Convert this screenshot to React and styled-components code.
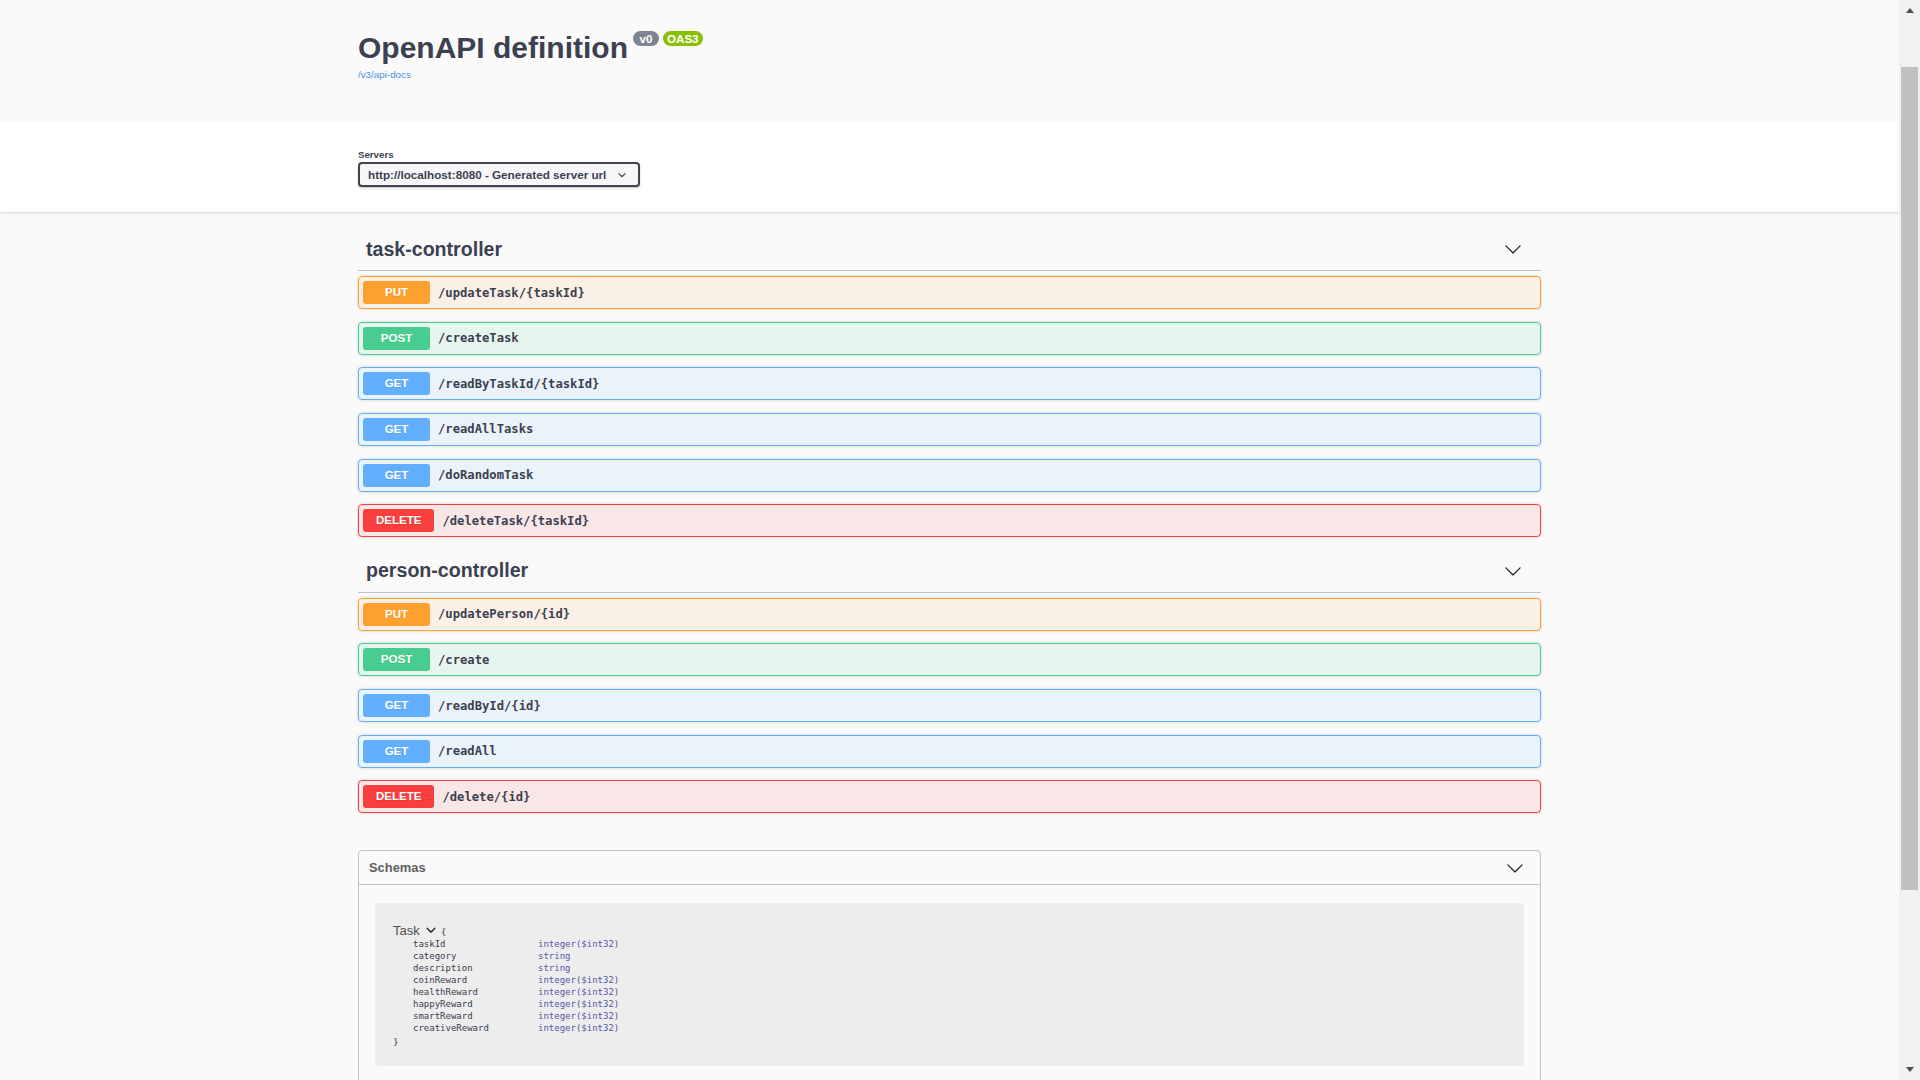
import React from 'react';
import styled, { createGlobalStyle } from 'styled-components';

// colours of each http verb, as swagger-ui paints them
const METHODS = {
  put: '#fca130',
  post: '#49cc90',
  get: '#61affe',
  delete: '#f93e3e',
};

const tags = [
  {
    name: 'task-controller',
    ops: [
      { method: 'put', path: '/updateTask/{taskId}' },
      { method: 'post', path: '/createTask' },
      { method: 'get', path: '/readByTaskId/{taskId}' },
      { method: 'get', path: '/readAllTasks' },
      { method: 'get', path: '/doRandomTask' },
      { method: 'delete', path: '/deleteTask/{taskId}' },
    ],
  },
  {
    name: 'person-controller',
    ops: [
      { method: 'put', path: '/updatePerson/{id}' },
      { method: 'post', path: '/create' },
      { method: 'get', path: '/readById/{id}' },
      { method: 'get', path: '/readAll' },
      { method: 'delete', path: '/delete/{id}' },
    ],
  },
];

const taskProps = [
  ['taskId', 'integer($int32)'],
  ['category', 'string'],
  ['description', 'string'],
  ['coinReward', 'integer($int32)'],
  ['healthReward', 'integer($int32)'],
  ['happyReward', 'integer($int32)'],
  ['smartReward', 'integer($int32)'],
  ['creativeReward', 'integer($int32)'],
];

const ARROW =
  'M17.418 6.109c.272-.268.709-.268.979 0s.271.701 0 .969l-7.908 7.83c-.27.268-.707.268-.979 0l-7.908-7.83c-.27-.268-.27-.701 0-.969.271-.268.709-.268.979 0L10 13.25l7.418-7.141z';
const SMALL_ARROW =
  'M13.418 7.859a.695.695 0 01.978 0 .68.68 0 010 .969l-3.908 3.83a.697.697 0 01-.979 0l-3.908-3.83a.68.68 0 010-.969.695.695 0 01.978 0L10 11l3.418-3.141z';

export default function App() {
  return (
    <Page>
      <GlobalStyle />
      <Main>
        <Header>
          <Wrapper>
            <TitleRow>
              <Title>OpenAPI definition</Title>
              <Badge $bg="#7d8492">v0</Badge>
              <Badge $bg="#89bf04">OAS3</Badge>
            </TitleRow>
            <DocLink>/v3/api-docs</DocLink>
          </Wrapper>
        </Header>

        <SchemeBar>
          <Wrapper>
            <ServersLabel>Servers</ServersLabel>
            <ServerSelect>
              <span>http://localhost:8080 - Generated server url</span>
              <svg width="16" height="16" viewBox="0 0 20 20">
                <path d={SMALL_ARROW} fill="#3b4151" />
              </svg>
            </ServerSelect>
          </Wrapper>
        </SchemeBar>

        <Wrapper>
          {tags.map((tag) => (
            <TagSection key={tag.name}>
              <TagHeading>
                <TagName>{tag.name}</TagName>
                <svg width="18" height="18" viewBox="0 0 20 20">
                  <path d={ARROW} fill="#222" />
                </svg>
              </TagHeading>
              {tag.ops.map((op) => (
                <OpBlock key={op.method + op.path} $color={METHODS[op.method]}>
                  <Method $color={METHODS[op.method]}>{op.method.toUpperCase()}</Method>
                  <OpPath>{op.path}</OpPath>
                </OpBlock>
              ))}
            </TagSection>
          ))}

          <Models>
            <ModelsHeader>
              <span>Schemas</span>
              <svg width="18" height="18" viewBox="0 0 20 20">
                <path d={ARROW} fill="#222" />
              </svg>
            </ModelsHeader>
            <ModelContainer>
              <ModelTitleRow>
                <ModelName>Task</ModelName>
                <svg width="20" height="20" viewBox="0 0 20 20">
                  <path d={SMALL_ARROW} fill="#303030" />
                </svg>
                <Brace $lower>{'{'}</Brace>
              </ModelTitleRow>
              <PropGrid>
                {taskProps.map(([name, type]) => (
                  <React.Fragment key={name}>
                    <PropName>{name}</PropName>
                    <PropType>{type}</PropType>
                  </React.Fragment>
                ))}
              </PropGrid>
              <Brace>{'}'}</Brace>
            </ModelContainer>
          </Models>
        </Wrapper>
      </Main>

      <Scrollbar>
        <ScrollArrow>
          <Triangle />
        </ScrollArrow>
        <Track>
          <Thumb />
        </Track>
        <ScrollArrow>
          <Triangle $down />
        </ScrollArrow>
      </Scrollbar>
    </Page>
  );
}

const GlobalStyle = createGlobalStyle`
  html, body {
    margin: 0;
    padding: 0;
    overflow: hidden;
    background: #fafafa;
  }
  body {
    font-family: "Liberation Sans", Arial, sans-serif;
    color: #3b4151;
  }
`;

const Page = styled.div`
  display: flex;
  width: 100vw;
  height: 100vh;
  overflow: hidden;
  background: #fafafa;
`;

const Main = styled.main`
  flex: 1;
  min-width: 0;
  height: 100%;
  overflow: hidden;
`;

const Wrapper = styled.div`
  width: 1183px;
  margin: 0 auto;
`;

const Header = styled.header`
  height: 122px;
  box-sizing: border-box;
  padding-top: 31px;
  background: #fafafa;
`;

const TitleRow = styled.div`
  display: flex;
  align-items: flex-start;
  gap: 4px;
`;

const Title = styled.h2`
  margin: 0 1px 0 0;
  font-size: 30px;
  line-height: 34px;
  font-weight: 700;
  color: #3b4151;
`;

const Badge = styled.span`
  min-width: 26px;
  box-sizing: border-box;
  height: 15px;
  padding: 0 4px;
  border-radius: 46px;
  background: ${(p) => p.$bg};
  color: #fff;
  font-size: 11.6px;
  font-weight: 700;
  line-height: 15px;
  text-align: center;
`;

const DocLink = styled.a`
  display: block;
  margin-top: 4px;
  font-size: 9.8px;
  line-height: 12px;
  color: #4990e2;
  cursor: pointer;
`;

const SchemeBar = styled.section`
  padding: 27px 0 25px;
  background: #fff;
  box-shadow: 0 1px 2px 0 rgba(0, 0, 0, 0.15);
`;

const ServersLabel = styled.div`
  font-size: 9.7px;
  line-height: 12px;
  font-weight: 700;
  color: #3b4151;
  margin-bottom: 1px;
`;

const ServerSelect = styled.div`
  display: inline-flex;
  align-items: center;
  height: 25px;
  box-sizing: border-box;
  padding: 0 8px;
  border: 2px solid #41444e;
  border-radius: 4px;
  background: #f7f7f7;
  box-shadow: 0 1px 2px 0 rgba(0, 0, 0, 0.25);
  font-size: 11.7px;
  font-weight: 700;
  color: #3b4151;
  svg {
    margin-left: 8px;
  }
`;

const TagSection = styled.section`
  padding-top: 16px;
  & + & {
    padding-top: 0;
  }
`;

const TagHeading = styled.div`
  display: flex;
  align-items: center;
  justify-content: space-between;
  height: 43px;
  box-sizing: border-box;
  padding: 0 19px 0 8px;
  margin-bottom: 5px;
  border-bottom: 1px solid rgba(59, 65, 81, 0.3);
`;

const TagName = styled.h3`
  margin: 0;
  font-size: 19.6px;
  font-weight: 700;
  color: #3b4151;
`;

const OpBlock = styled.div`
  display: flex;
  align-items: center;
  height: 33px;
  box-sizing: border-box;
  padding: 0 4px;
  margin-bottom: 12.65px;
  border: 1px solid ${(p) => p.$color};
  border-radius: 4px;
  background: ${(p) => p.$color}1a;
  box-shadow: 0 0 3px rgba(0, 0, 0, 0.19);
`;

const Method = styled.span`
  min-width: 67px;
  height: 23px;
  box-sizing: border-box;
  padding: 0 13px;
  border-radius: 3px;
  background: ${(p) => p.$color};
  color: #fff;
  font-size: 11.5px;
  font-weight: 700;
  line-height: 23px;
  text-align: center;
  text-shadow: 0 1px 0 rgba(0, 0, 0, 0.1);
`;

const OpPath = styled.span`
  margin-left: 8px;
  font-family: "DejaVu Sans Mono", "Liberation Mono", monospace;
  font-size: 12.2px;
  font-weight: 600;
  color: #3b4151;
`;

const Models = styled.section`
  margin-top: 37px;
  min-height: 400px;
  border: 1px solid rgba(59, 65, 81, 0.3);
  border-radius: 4px;
`;

const ModelsHeader = styled.h4`
  display: flex;
  align-items: center;
  justify-content: space-between;
  height: 34px;
  box-sizing: border-box;
  margin: 0;
  padding: 0 16px 0 10px;
  border-bottom: 1px solid rgba(59, 65, 81, 0.3);
  font-size: 12.9px;
  font-weight: 700;
  color: #606060;
`;

const ModelContainer = styled.div`
  margin: 18px 16px 12px;
  padding: 19px 18px 18px;
  border-radius: 4px;
  background: #ededed;
`;

const ModelTitleRow = styled.div`
  display: flex;
  align-items: center;
  height: 16px;
  svg {
    margin: 0 0 0 1px;
  }
`;

const ModelName = styled.span`
  font-size: 13px;
  color: #505050;
`;

const Brace = styled.div`
  font-family: "DejaVu Sans Mono", "Liberation Mono", monospace;
  font-size: 9.5px;
  line-height: 12px;
  color: #3b4151;
  margin-top: ${(p) => (p.$lower ? '4px' : '2px')};
`;

const PropGrid = styled.div`
  display: grid;
  grid-template-columns: 125px auto;
  margin-left: 20px;
  font-family: "DejaVu Sans Mono", "Liberation Mono", monospace;
  font-size: 9px;
  line-height: 12px;
`;

const PropName = styled.span`
  color: #3b4151;
`;

const PropType = styled.span`
  color: #55a;
`;

const Scrollbar = styled.div`
  display: flex;
  flex-direction: column;
  width: 21px;
  flex-shrink: 0;
  height: 100%;
  background: #f1f1f1;
`;

const ScrollArrow = styled.div`
  display: flex;
  align-items: center;
  justify-content: center;
  height: 21px;
`;

const Triangle = styled.div`
  width: 0;
  height: 0;
  border-left: 4.5px solid transparent;
  border-right: 4.5px solid transparent;
  ${(p) =>
    p.$down ? 'border-top: 5px solid #505050;' : 'border-bottom: 5px solid #505050;'}
`;

const Track = styled.div`
  flex: 1;
  padding-top: 46px;
`;

const Thumb = styled.div`
  height: 823px;
  margin: 0 2px;
  background: #c1c1c1;
`;
